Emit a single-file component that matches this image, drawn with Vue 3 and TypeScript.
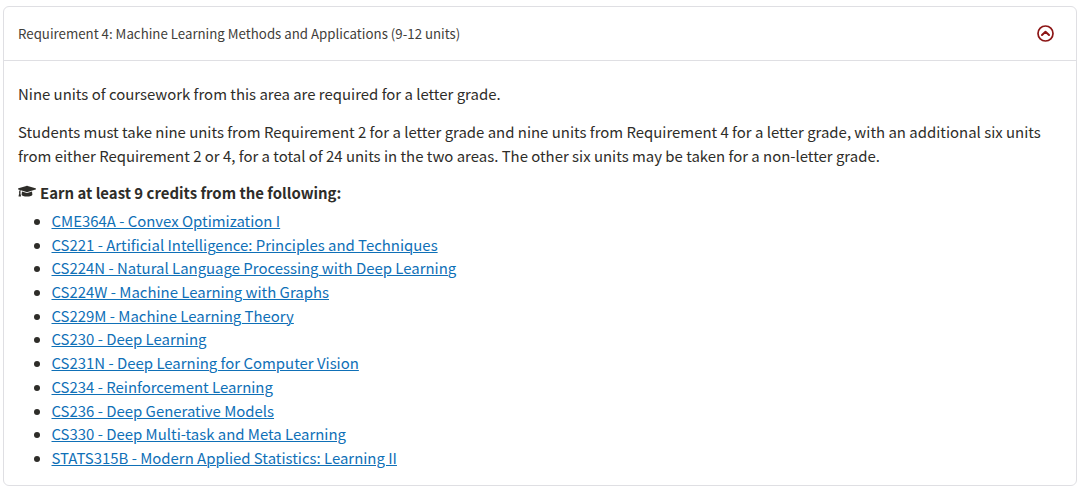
<script setup lang="ts">
const courses: string[] = [
  'CME364A - Convex Optimization I',
  'CS221 - Artificial Intelligence: Principles and Techniques',
  'CS224N - Natural Language Processing with Deep Learning',
  'CS224W - Machine Learning with Graphs',
  'CS229M - Machine Learning Theory',
  'CS230 - Deep Learning',
  'CS231N - Deep Learning for Computer Vision',
  'CS234 - Reinforcement Learning',
  'CS236 - Deep Generative Models',
  'CS330 - Deep Multi-task and Meta Learning',
  'STATS315B - Modern Applied Statistics: Learning II',
]
</script>

<template>
  <section class="card">
    <header class="head">
      <span class="title">Requirement 4: Machine Learning Methods and Applications (9-12 units)</span>
      <svg class="toggle" width="17" height="17" viewBox="0 0 17 17" fill="none" aria-hidden="true">
        <circle cx="8.500" cy="8.500" r="7.500" stroke="#8c1515" stroke-width="1.700" />
        <path d="M5 10 8.500 6.800 12 10" stroke="#8c1515" stroke-width="2" stroke-linecap="round" stroke-linejoin="round" />
      </svg>
    </header>
    <div class="body">
      <p class="para">Nine units of coursework from this area are required for a letter grade.</p>
      <p class="para">Students must take nine units from Requirement 2 for a letter grade and nine units from Requirement 4 for a letter grade, with an additional six units from either Requirement 2 or 4, for a total of 24 units in the two areas. The other six units may be taken for a non-letter grade.</p>
      <div class="earn">
        <svg class="cap" width="18" height="14.400" viewBox="0 0 640 512" aria-hidden="true">
          <path fill="#2e2d29" d="M622.34 153.2L343.4 67.5c-15.2-4.67-31.6-4.67-46.79 0L17.66 153.2c-23.54 7.23-23.54 38.36 0 45.59l48.63 14.94c-10.67 13.19-17.23 29.28-17.88 46.9C38.78 266.15 32 276.11 32 288c0 10.78 5.68 19.85 13.86 25.65L20.33 428.53C18.11 438.52 25.71 448 35.94 448h56.11c10.24 0 17.84-9.48 15.62-19.47L82.14 313.65C90.32 307.85 96 298.78 96 288c0-11.57-6.47-21.25-15.66-26.87.76-15.02 8.44-28.3 20.69-36.72L296.6 284.5c9.06 2.78 26.44 6.25 46.79 0l278.95-85.7c23.55-7.24 23.55-38.36 0-45.6zM352.79 315.09c-28.53 8.76-52.84 3.92-65.59 0l-145.02-44.55L128 384c0 35.35 85.96 64 192 64s192-28.65 192-64l-14.18-113.47-145.03 44.56z" />
        </svg>
        <strong>Earn at least 9 credits from the following:</strong>
      </div>
      <ul class="list">
        <li v-for="c in courses" :key="c"><a href="#">{{ c }}</a></li>
      </ul>
    </div>
  </section>
</template>

<style>
html, body { margin: 0; background: #fff; }
</style>

<style scoped>
.card {
  box-sizing: border-box;
  width: 1074px;
  height: 480px;
  margin: 6px 0 0 3px;
  border: 1px solid #dfdfe3;
  border-radius: 6px;
  font-family: "Noto Sans CJK SC", "Source Sans Pro", sans-serif;
  color: #2e2d29;
  font-size: 14.930px;
  line-height: 23.750px;
}
.head {
  display: flex;
  align-items: center;
  justify-content: space-between;
  box-sizing: border-box;
  height: 54px;
  padding: 0 22px 0 14px;
  border-bottom: 1px solid #dfdfe3;
}
.title { font-size: 13.270px; color: #3f3e3a; }
.body { padding: 21px 14px 0; }
.para { margin: 0 0 14px; }
.earn { display: flex; align-items: center; gap: 4px; font-weight: 700; }
.earn strong { font-weight: 700; }
.cap { flex: none; margin-bottom: 3px; }
.list { margin: 4px 0 0; padding: 0 0 0 33.500px; line-height: 23.690px; }
.list a { color: #0f70b7; text-decoration: underline; text-decoration-thickness: 1.300px; }
</style>
